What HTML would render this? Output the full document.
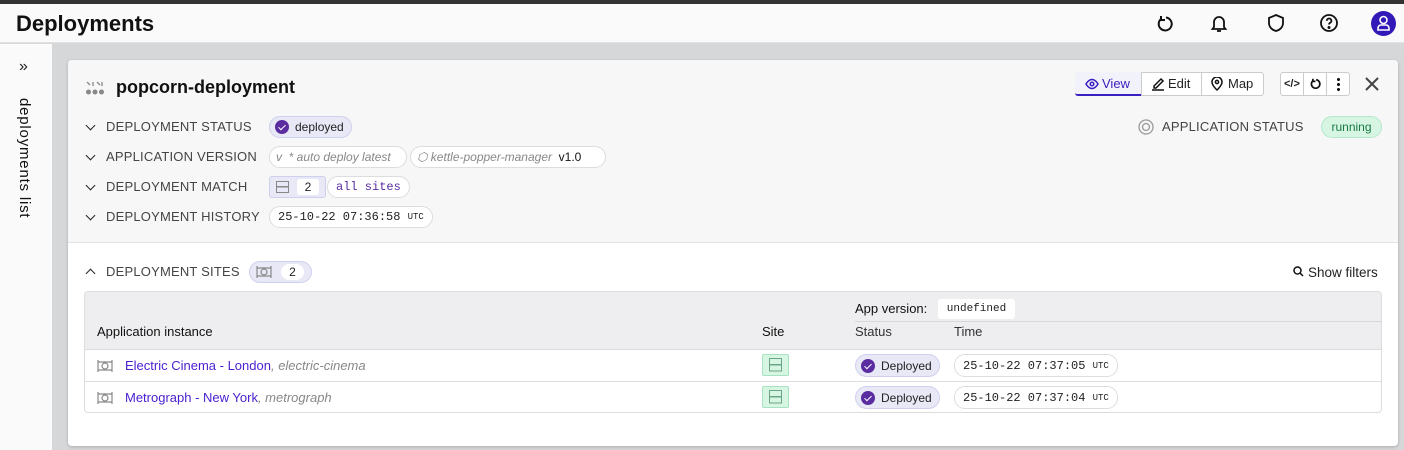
<!DOCTYPE html>
<html><head><meta charset="utf-8"><style>
*{box-sizing:border-box;margin:0;padding:0}
body{width:1404px;height:450px;overflow:hidden;background:#d5d7d9;font-family:"Liberation Sans",sans-serif;color:#222;position:relative}
.a{position:absolute}
.mono{font-family:"Liberation Mono",monospace}
.lbl{font-size:13px;color:#444;letter-spacing:.2px}
.chev{width:7px;height:7px;border-right:1.5px solid #222;border-bottom:1.5px solid #222;transform:rotate(45deg)}
.pill{border:1px solid #ddd;border-radius:11px;background:#fff;height:22px;font-size:12px;display:flex;align-items:center;padding:0 8px;white-space:nowrap}
.tag{background:#e8e8f6;border:1px solid #cfd0ee;border-radius:12px;height:22px;display:flex;align-items:center;font-size:12px;padding:0 7px 0 5px}
.ck{width:14px;height:14px;border-radius:50%;background:#5a2ca0;display:inline-block;margin-right:6px;position:relative}
.ck:after{content:"";position:absolute;left:4.5px;top:3px;width:3px;height:6px;border:solid #fff;border-width:0 1.5px 1.5px 0;transform:rotate(45deg)}
a{color:#4a1fd0;text-decoration:none}
</style></head><body>
<div class="a" style="left:0;top:0;width:1404px;height:4px;background:#333"></div>
<div class="a" style="left:0;top:4px;width:1404px;height:39px;background:#fafafa;border-bottom:1px solid #e2e2e2"></div>
<div class="a" style="left:16px;top:11px;font-size:22px;font-weight:bold;color:#111">Deployments</div>
<svg class="a" style="left:1155px;top:14px" width="20" height="20" viewBox="0 0 20 20" fill="none" stroke="#111" stroke-width="2"><path d="M6 5 A6.5 6.5 0 1 0 11 3.5"/><path d="M6 2v4h4"/></svg>
<svg class="a" style="left:1209px;top:13px" width="20" height="20" viewBox="0 0 20 20" fill="none" stroke="#111" stroke-width="1.8"><path d="M5 14V9a5 5 0 0 1 10 0v5l1.5 2h-13z"/><path d="M8 18h4"/></svg>
<svg class="a" style="left:1266px;top:13px" width="20" height="20" viewBox="0 0 20 20" fill="none" stroke="#111" stroke-width="1.8"><path d="M10 2l7 3v5c0 4-3 7-7 8-4-1-7-4-7-8V5z"/></svg>
<svg class="a" style="left:1319px;top:13px" width="20" height="20" viewBox="0 0 20 20" fill="none" stroke="#111" stroke-width="1.8"><circle cx="10" cy="10" r="8"/><path d="M7.8 7.8a2.3 2.3 0 1 1 3 2.2c-.6.3-.8.7-.8 1.5"/><circle cx="10" cy="14.5" r=".6" fill="#111"/></svg>
<div class="a" style="left:1371px;top:11px;width:25px;height:25px;border-radius:50%;background:#3318b8"></div>
<svg class="a" style="left:1374px;top:13px" width="19" height="20" viewBox="0 0 19 20" fill="none" stroke="#fff" stroke-width="1.6"><circle cx="9.5" cy="7" r="3.5"/><path d="M4 17v-2a3 3 0 0 1 3-3h5a3 3 0 0 1 3 3v2z"/></svg>
<div class="a" style="left:0;top:44px;width:52px;height:406px;background:#fafafa"></div>
<div class="a" style="left:19px;top:58px;font-size:16px;color:#222">»</div>
<div class="a" style="left:16px;top:98px;font-size:15px;color:#111;writing-mode:vertical-rl;letter-spacing:.8px">deployments list</div>
<div class="a" style="left:68px;top:60px;width:1330px;height:386px;background:#fff;border-radius:4px;box-shadow:0 1px 3px rgba(0,0,0,.2);overflow:hidden">
 <div class="a" style="left:0;top:0;width:1330px;height:183px;background:#f7f7f7;border-bottom:1px solid #e2e2e2"></div>
</div>
<svg class="a" style="left:85px;top:80px" width="20" height="16" viewBox="0 0 20 16" fill="#888"><circle cx="3.5" cy="12" r="2.5"/><circle cx="10" cy="12" r="2.5"/><circle cx="16.5" cy="12" r="2.5"/><path d="M2 2l3 3M8 2v4M12 2l3 3m2-3v4" stroke="#888" stroke-width="1.3"/></svg>
<div class="a" style="left:116px;top:77px;font-size:18px;font-weight:bold;color:#111">popcorn-deployment</div>
<div class="a chev" style="left:87px;top:122px"></div><div class="a lbl" style="left:106px;top:119px">DEPLOYMENT STATUS</div>
<div class="a tag" style="left:269px;top:116px"><span class="ck"></span>deployed</div>
<div class="a chev" style="left:87px;top:152px"></div><div class="a lbl" style="left:106px;top:149px">APPLICATION VERSION</div>
<div class="a pill" style="left:269px;top:146px;width:138px;color:#888;font-style:italic;font-size:12px;padding:0 6px">v&nbsp;&nbsp;* auto deploy latest</div>
<div class="a pill" style="left:410px;top:146px;width:196px;color:#888;font-style:italic;font-size:12px;padding:0 6px">⬡&nbsp;kettle-popper-manager&nbsp;&nbsp;<span style="font-style:normal;color:#111">v1.0</span></div>
<div class="a chev" style="left:87px;top:182px"></div><div class="a lbl" style="left:106px;top:179px">DEPLOYMENT MATCH</div>
<div class="a" style="left:269px;top:176px;width:57px;height:22px;background:#e8e8f6;border:1px solid #cfd0ee;border-radius:3px"></div>
<svg class="a" style="left:276px;top:181px" width="13" height="12" viewBox="0 0 13 12" fill="none" stroke="#888"><rect x=".5" y=".5" width="12" height="5"/><rect x=".5" y="6" width="12" height="5.5"/></svg>
<div class="a" style="left:297px;top:179px;width:22px;height:16px;background:#fff;border-radius:3px;font-size:12px;text-align:center;line-height:16px">2</div>
<div class="a pill mono" style="left:327px;top:176px;color:#5a2ca0;font-size:12px">all sites</div>
<div class="a chev" style="left:87px;top:212px"></div><div class="a lbl" style="left:106px;top:209px">DEPLOYMENT HISTORY</div>
<div class="a pill mono" style="left:269px;top:206px;font-size:12px">25-10-22 07:36:58&nbsp;<span style="font-size:9px">UTC</span></div>
<div class="a" style="left:1075px;top:72px;width:189px;height:24px;border:1px solid #ccc;border-radius:3px;background:#fff"></div>
<div class="a" style="left:1075px;top:72px;width:66px;height:24px;background:#f2f2fb;border-bottom:2px solid #3a1fc0;border-radius:3px 0 0 3px"></div>
<div class="a" style="left:1141px;top:72px;width:1px;height:24px;background:#ccc"></div>
<div class="a" style="left:1201px;top:72px;width:1px;height:24px;background:#ccc"></div>
<svg class="a" style="left:1085px;top:78px" width="14" height="12" viewBox="0 0 14 12" fill="none" stroke="#3a1fc0" stroke-width="1.5"><path d="M1 6s2.5-4.5 6-4.5S13 6 13 6s-2.5 4.5-6 4.5S1 6 1 6z"/><circle cx="7" cy="6" r="1.8"/></svg>
<div class="a" style="left:1102px;top:76px;font-size:13px;color:#3a1fc0">View</div>
<svg class="a" style="left:1151px;top:76px" width="14" height="15" viewBox="0 0 14 15" fill="none" stroke="#111" stroke-width="1.5"><path d="M3 10l7-7 2 2-7 7H3z"/><path d="M1 14h12"/></svg>
<div class="a" style="left:1168px;top:76px;font-size:13px">Edit</div>
<svg class="a" style="left:1211px;top:77px" width="12" height="14" viewBox="0 0 12 14" fill="none" stroke="#111" stroke-width="1.5"><path d="M6 13s5-4.5 5-8A5 5 0 0 0 1 5c0 3.5 5 8 5 8z"/><circle cx="6" cy="5" r="1.6"/></svg>
<div class="a" style="left:1228px;top:76px;font-size:13px">Map</div>
<div class="a" style="left:1280px;top:72px;width:70px;height:24px;border:1px solid #ccc;border-radius:3px;background:#fff"></div>
<div class="a" style="left:1303px;top:72px;width:1px;height:24px;background:#ccc"></div>
<div class="a" style="left:1326px;top:72px;width:1px;height:24px;background:#ccc"></div>
<div class="a" style="left:1284px;top:78px;font-size:11px;font-weight:bold">&lt;/&gt;</div>
<svg class="a" style="left:1309px;top:77px" width="13" height="14" viewBox="0 0 20 20" fill="none" stroke="#111" stroke-width="2.6"><path d="M6 5 A6.5 6.5 0 1 0 11 3.5"/><path d="M6 2v4h4"/></svg>
<div class="a" style="left:1337px;top:77px;width:3px;height:14px;background:radial-gradient(circle,#111 1.4px,transparent 1.6px) 0 0/3px 5px"></div>
<svg class="a" style="left:1364px;top:76px" width="16" height="16" viewBox="0 0 16 16" stroke="#444" stroke-width="2"><path d="M2 2l12 12M14 2L2 14"/></svg>
<svg class="a" style="left:1138px;top:119px" width="16" height="16" viewBox="0 0 16 16" fill="none" stroke="#999" stroke-width="1.3"><circle cx="8" cy="8" r="7"/><circle cx="8" cy="8" r="3.5"/></svg>
<div class="a lbl" style="left:1162px;top:119px">APPLICATION STATUS</div>
<div class="a" style="left:1321px;top:116px;width:61px;height:22px;border-radius:11px;background:#d6f5e3;border:1px solid #b5e8cb;color:#1a7a44;font-size:12px;text-align:center;line-height:20px">running</div>
<div class="a chev" style="left:87px;top:270px;transform:rotate(225deg)"></div>
<div class="a lbl" style="left:106px;top:264px">DEPLOYMENT SITES</div>
<div class="a" style="left:249px;top:261px;width:63px;height:22px;border-radius:11px;background:#e8e8f6;border:1px solid #cfd0ee"></div>
<svg class="a" style="left:256px;top:265px" width="16" height="14" viewBox="0 0 16 14" fill="none" stroke="#888" stroke-width="1.2"><path d="M1 3h14M1 11h14M1 1v12M15 1v12"/><circle cx="8" cy="7" r="3"/></svg>
<div class="a" style="left:281px;top:264px;width:23px;height:16px;background:#fff;border-radius:8px;font-size:12px;text-align:center;line-height:16px">2</div>
<svg class="a" style="left:1293px;top:266px" width="11" height="11" viewBox="0 0 11 11" fill="none" stroke="#111" stroke-width="1.5"><circle cx="4.5" cy="4.5" r="3.5"/><path d="M7 7l3 3"/></svg>
<div class="a" style="left:1308px;top:265px;font-size:13.5px">Show filters</div>
<div class="a" style="left:84px;top:291px;width:1298px;height:122px;border:1px solid #ddd;border-radius:4px;background:#fff;overflow:hidden">
 <div class="a" style="left:0;top:0;width:1298px;height:58px;background:#eeeef0;border-bottom:1px solid #ddd"></div>
 <div class="a" style="left:770px;top:29px;width:526px;height:1px;background:#d8d8d8"></div>
 <div class="a" style="left:0;top:89px;width:1298px;height:1px;background:#ddd"></div>
</div>
<div class="a" style="left:97px;top:324px;font-size:13px;color:#111">Application instance</div>
<div class="a" style="left:762px;top:324px;font-size:13px;color:#111">Site</div>
<div class="a" style="left:855px;top:301px;font-size:13px;color:#111">App version:</div>
<div class="a mono" style="left:938px;top:299px;width:77px;height:20px;background:#fff;border-radius:3px;font-size:11px;line-height:20px;text-align:center">undefined</div>
<div class="a" style="left:855px;top:324px;font-size:13px;color:#333">Status</div>
<div class="a" style="left:954px;top:324px;font-size:13px;color:#333">Time</div>
<svg class="a" style="left:97px;top:359px" width="16" height="14" viewBox="0 0 16 14" fill="none" stroke="#888" stroke-width="1.2"><path d="M1 3h14M1 11h14M1 1v12M15 1v12"/><circle cx="8" cy="7" r="3"/></svg>
<div class="a" style="left:125px;top:358px;font-size:13px"><a>Electric Cinema - London</a><span style="color:#888;font-style:italic">, electric-cinema</span></div>
<div class="a" style="left:762px;top:354px;width:27px;height:22px;background:#d6f5e3;border:1px solid #a8e2c2;border-radius:2px"></div>
<svg class="a" style="left:769px;top:358px" width="13" height="14" viewBox="0 0 13 14" fill="none" stroke="#6aa585"><rect x=".5" y=".5" width="12" height="6"/><rect x=".5" y="7" width="12" height="6"/></svg>
<div class="a tag" style="left:855px;top:354px;height:23px"><span class="ck"></span>Deployed</div>
<div class="a pill mono" style="left:954px;top:354px;height:23px;font-size:12px">25-10-22 07:37:05&nbsp;<span style="font-size:9px">UTC</span></div>
<svg class="a" style="left:97px;top:391px" width="16" height="14" viewBox="0 0 16 14" fill="none" stroke="#888" stroke-width="1.2"><path d="M1 3h14M1 11h14M1 1v12M15 1v12"/><circle cx="8" cy="7" r="3"/></svg>
<div class="a" style="left:125px;top:390px;font-size:13px"><a>Metrograph - New York</a><span style="color:#888;font-style:italic">, metrograph</span></div>
<div class="a" style="left:762px;top:386px;width:27px;height:22px;background:#d6f5e3;border:1px solid #a8e2c2;border-radius:2px"></div>
<svg class="a" style="left:769px;top:390px" width="13" height="14" viewBox="0 0 13 14" fill="none" stroke="#6aa585"><rect x=".5" y=".5" width="12" height="6"/><rect x=".5" y="7" width="12" height="6"/></svg>
<div class="a tag" style="left:855px;top:386px;height:23px"><span class="ck"></span>Deployed</div>
<div class="a pill mono" style="left:954px;top:386px;height:23px;font-size:12px">25-10-22 07:37:04&nbsp;<span style="font-size:9px">UTC</span></div>
</body></html>
